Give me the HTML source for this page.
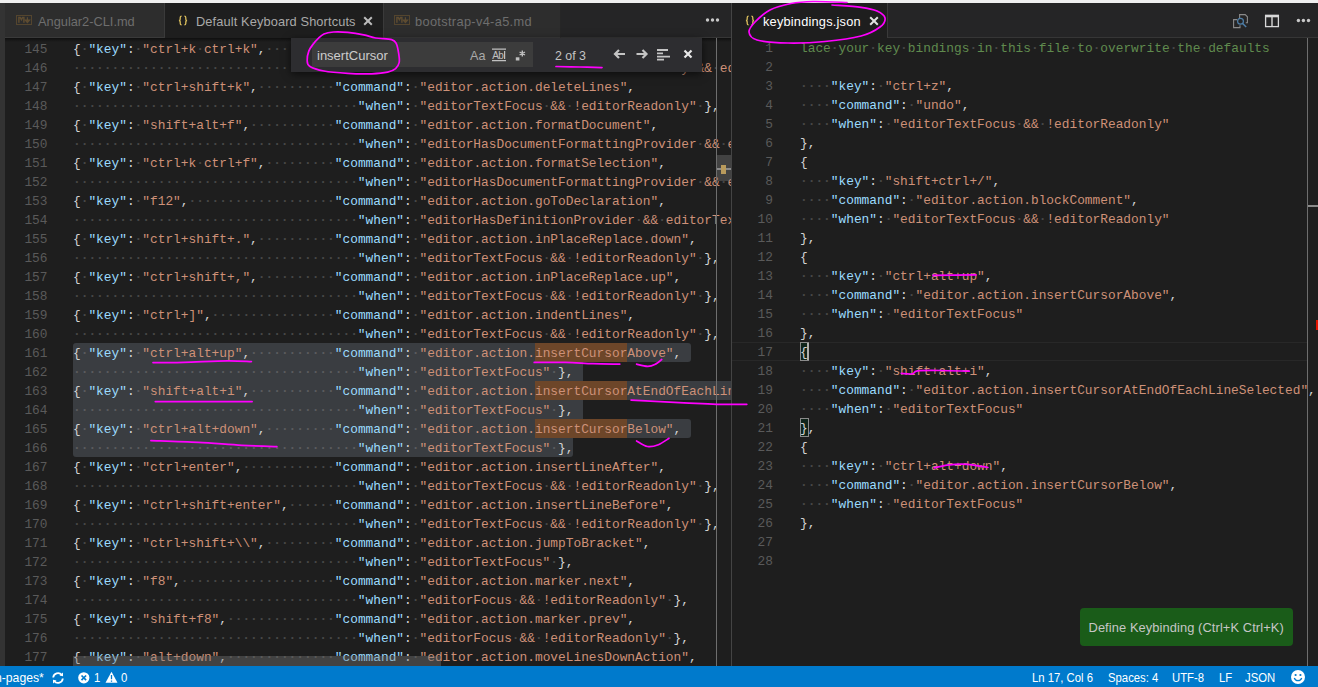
<!DOCTYPE html>
<html><head><meta charset="utf-8">
<style>
*{box-sizing:border-box}
html,body{margin:0;padding:0}
body{width:1318px;height:687px;overflow:hidden;background:#1e1e1e;position:relative;font-family:"Liberation Sans",sans-serif}
.a{position:absolute}
.ln{position:absolute;height:19px;line-height:19px;text-align:right;font-family:"Liberation Mono",monospace;font-size:12.83px;color:#5a5a5a;white-space:pre}
.cl{position:absolute;height:19px;line-height:19px;font-family:"Liberation Mono",monospace;font-size:12.83px;white-space:pre}
i{font-style:normal}
.p{color:#d4d4d4}.k{color:#9cdcfe}.s{color:#ce9178}.w{color:#474747;font-weight:bold}.c{color:#608b4e}
.sl .w{color:#5a5b5e}
.tt{position:absolute;font-size:12.8px;white-space:pre;line-height:16px;height:16px}
.sb{position:absolute;top:668px;font-size:12.3px;transform:scaleX(0.92);transform-origin:0 0;color:#fff;white-space:pre;line-height:21px;height:21px}
.selr{position:absolute;background:#3a3d41;height:19px}
.fm{position:absolute;background:#6d4629;height:19px}
</style></head><body>
<!-- top strip -->
<div class=a style="left:0;top:0;width:1318px;height:3px;background:#efefef"></div>
<!-- left dark strip -->
<div class=a style="left:0;top:3px;width:5px;height:663px;background:#333333"></div>

<!-- ===== LEFT GROUP TAB BAR ===== -->
<div class=a style="left:5px;top:3px;width:726px;height:35px;background:#252526;border-bottom:1px solid #363636"></div>
<div class=a style="left:5px;top:3px;width:160px;height:35px;background:#2d2d2d;border-right:1px solid #3a3a3a;border-bottom:1px solid #3a3a3a"></div>
<div class=a style="left:165px;top:3px;width:219px;height:35px;background:#1e1e1e;border-right:1px solid #3a3a3a"></div>
<div class=a style="left:384px;top:3px;width:177px;height:35px;background:#2d2d2d;border-right:1px solid #262626;border-bottom:1px solid #3d3d3d"></div>

<!-- tab icons/text -->
<svg class=a style="left:16px;top:15px" width="17" height="11" viewBox="0 0 17 11"><rect x="0.5" y="0.5" width="15" height="9" fill="none" stroke="#54452e" stroke-width="1"/><path d="M2.9 7.8V2.4H4.2L5.4 4.6L6.6 2.4H7.9V7.8" fill="none" stroke="#5e4c31" stroke-width="1.5"/><path d="M11.4 2.3V6M9.2 5L11.4 7.6L13.6 5Z" fill="#5e4c31" stroke="#5e4c31" stroke-width="1.2"/></svg>
<div class=tt style="left:38px;top:14px;color:#6e6e6e">Angular2-CLI.md</div>

<svg class=a style="left:178px;top:15px" width="10" height="11" viewBox="0 0 10 11"><path d="M3.6 1.2C2.4 1.2 2.2 1.8 2.2 2.8V4.3C2.2 5 1.8 5.4 1 5.5C1.8 5.6 2.2 6 2.2 6.7V8.2C2.2 9.2 2.4 9.8 3.6 9.8M6.4 1.2C7.6 1.2 7.8 1.8 7.8 2.8V4.3C7.8 5 8.2 5.4 9 5.5C8.2 5.6 7.8 6 7.8 6.7V8.2C7.8 9.2 7.6 9.8 6.4 9.8" fill="none" stroke="#d9bd5c" stroke-width="1.3"/></svg>
<div class=tt style="left:196px;top:14px;color:#a9a9a9;letter-spacing:0.12px">Default Keyboard Shortcuts</div>
<svg class=a style="left:363px;top:16px" width="10" height="10" viewBox="0 0 10 10"><path d="M1.2 1.2L8.8 8.8M8.8 1.2L1.2 8.8" stroke="#bcbcbc" stroke-width="2"/></svg>

<svg class=a style="left:394px;top:15px" width="17" height="11" viewBox="0 0 17 11"><rect x="0.5" y="0.5" width="15" height="9" fill="none" stroke="#54452e" stroke-width="1"/><path d="M2.9 7.8V2.4H4.2L5.4 4.6L6.6 2.4H7.9V7.8" fill="none" stroke="#5e4c31" stroke-width="1.5"/><path d="M11.4 2.3V6M9.2 5L11.4 7.6L13.6 5Z" fill="#5e4c31" stroke="#5e4c31" stroke-width="1.2"/></svg>
<div class=tt style="left:415px;top:14px;color:#6e6e6e;letter-spacing:0.33px">bootstrap-v4-a5.md</div>

<svg class=a style="left:704px;top:17px" width="18" height="6" viewBox="0 0 18 6"><circle cx="3.5" cy="3" r="1.7" fill="#c8c8c8"/><circle cx="8.5" cy="3" r="1.7" fill="#c8c8c8"/><circle cx="13.5" cy="3" r="1.7" fill="#c8c8c8"/></svg>

<!-- ===== LEFT EDITOR ===== -->
<div class=a style="left:5px;top:38px;width:726px;height:628px;overflow:hidden">
  <div class=a style="left:-5px;top:-38px;width:1318px;height:687px">
<div class=ln style="top:40px;left:0;width:47.5px">145</div>
<div class=ln style="top:59px;left:0;width:47.5px">146</div>
<div class=ln style="top:78px;left:0;width:47.5px">147</div>
<div class=ln style="top:97px;left:0;width:47.5px">148</div>
<div class=ln style="top:116px;left:0;width:47.5px">149</div>
<div class=ln style="top:135px;left:0;width:47.5px">150</div>
<div class=ln style="top:154px;left:0;width:47.5px">151</div>
<div class=ln style="top:173px;left:0;width:47.5px">152</div>
<div class=ln style="top:192px;left:0;width:47.5px">153</div>
<div class=ln style="top:211px;left:0;width:47.5px">154</div>
<div class=ln style="top:230px;left:0;width:47.5px">155</div>
<div class=ln style="top:249px;left:0;width:47.5px">156</div>
<div class=ln style="top:268px;left:0;width:47.5px">157</div>
<div class=ln style="top:287px;left:0;width:47.5px">158</div>
<div class=ln style="top:306px;left:0;width:47.5px">159</div>
<div class=ln style="top:325px;left:0;width:47.5px">160</div>
<div class=ln style="top:344px;left:0;width:47.5px">161</div>
<div class=ln style="top:363px;left:0;width:47.5px">162</div>
<div class=ln style="top:382px;left:0;width:47.5px">163</div>
<div class=ln style="top:401px;left:0;width:47.5px">164</div>
<div class=ln style="top:420px;left:0;width:47.5px">165</div>
<div class=ln style="top:439px;left:0;width:47.5px">166</div>
<div class=ln style="top:458px;left:0;width:47.5px">167</div>
<div class=ln style="top:477px;left:0;width:47.5px">168</div>
<div class=ln style="top:496px;left:0;width:47.5px">169</div>
<div class=ln style="top:515px;left:0;width:47.5px">170</div>
<div class=ln style="top:534px;left:0;width:47.5px">171</div>
<div class=ln style="top:553px;left:0;width:47.5px">172</div>
<div class=ln style="top:572px;left:0;width:47.5px">173</div>
<div class=ln style="top:591px;left:0;width:47.5px">174</div>
<div class=ln style="top:610px;left:0;width:47.5px">175</div>
<div class=ln style="top:629px;left:0;width:47.5px">176</div>
<div class=ln style="top:648px;left:0;width:47.5px">177</div>
<div class=selr style="left:73px;top:343px;width:618px;border-radius:3px 3px 3px 0"></div>
<div class=selr style="left:73px;top:362px;width:510px;border-radius:0"></div>
<div class=selr style="left:73px;top:381px;width:667px;border-radius:0"></div>
<div class=selr style="left:73px;top:400px;width:510px;border-radius:0"></div>
<div class=selr style="left:73px;top:419px;width:618px;border-radius:0 3px 3px 0"></div>
<div class=selr style="left:73px;top:438px;width:500px;border-radius:0 0 3px 3px"></div>
<div class=fm style="left:534.8px;top:343px;width:92.4px"></div>
<div class=fm style="left:534.8px;top:381px;width:92.4px"></div>
<div class=fm style="left:534.8px;top:419px;width:92.4px"></div>
<div class="cl" style="top:40px;left:73px"><i class=p>{</i><i class=w>·</i><i class=k>&quot;key&quot;</i><i class=p>:</i><i class=w>·</i><i class=s>&quot;ctrl+k</i><i class=w>·</i><i class=s>ctrl+k&quot;</i><i class=p>,</i><i class=w>·········</i><i class=k>&quot;command&quot;</i><i class=p>:</i><i class=w>·</i><i class=s>&quot;editor.action.defineKeybinding&quot;</i><i class=p>,</i></div>
<div class="cl" style="top:59px;left:73px"><i class=w>·····································</i><i class=k>&quot;when&quot;</i><i class=p>:</i><i class=w>·</i><i class=s>&quot;editorTextFocus</i><i class=w>·</i><i class=s>&amp;&amp;</i><i class=w>·</i><i class=s>!editorReadonly</i><i class=w>·</i><i class=s>&amp;&amp;</i><i class=w>·</i><i class=s>editorLangId</i><i class=w>·</i><i class=s>==</i><i class=w>·</i><i class=s>&#x27;json&#x27;&quot;</i><i class=w>·</i><i class=p>},</i></div>
<div class="cl" style="top:78px;left:73px"><i class=p>{</i><i class=w>·</i><i class=k>&quot;key&quot;</i><i class=p>:</i><i class=w>·</i><i class=s>&quot;ctrl+shift+k&quot;</i><i class=p>,</i><i class=w>··········</i><i class=k>&quot;command&quot;</i><i class=p>:</i><i class=w>·</i><i class=s>&quot;editor.action.deleteLines&quot;</i><i class=p>,</i></div>
<div class="cl" style="top:97px;left:73px"><i class=w>·····································</i><i class=k>&quot;when&quot;</i><i class=p>:</i><i class=w>·</i><i class=s>&quot;editorTextFocus</i><i class=w>·</i><i class=s>&amp;&amp;</i><i class=w>·</i><i class=s>!editorReadonly&quot;</i><i class=w>·</i><i class=p>},</i></div>
<div class="cl" style="top:116px;left:73px"><i class=p>{</i><i class=w>·</i><i class=k>&quot;key&quot;</i><i class=p>:</i><i class=w>·</i><i class=s>&quot;shift+alt+f&quot;</i><i class=p>,</i><i class=w>···········</i><i class=k>&quot;command&quot;</i><i class=p>:</i><i class=w>·</i><i class=s>&quot;editor.action.formatDocument&quot;</i><i class=p>,</i></div>
<div class="cl" style="top:135px;left:73px"><i class=w>·····································</i><i class=k>&quot;when&quot;</i><i class=p>:</i><i class=w>·</i><i class=s>&quot;editorHasDocumentFormattingProvider</i><i class=w>·</i><i class=s>&amp;&amp;</i><i class=w>·</i><i class=s>editorTextFocus</i><i class=w>·</i><i class=s>&amp;&amp;</i><i class=w>·</i><i class=s>!editorReadonly&quot;</i><i class=w>·</i><i class=p>},</i></div>
<div class="cl" style="top:154px;left:73px"><i class=p>{</i><i class=w>·</i><i class=k>&quot;key&quot;</i><i class=p>:</i><i class=w>·</i><i class=s>&quot;ctrl+k</i><i class=w>·</i><i class=s>ctrl+f&quot;</i><i class=p>,</i><i class=w>·········</i><i class=k>&quot;command&quot;</i><i class=p>:</i><i class=w>·</i><i class=s>&quot;editor.action.formatSelection&quot;</i><i class=p>,</i></div>
<div class="cl" style="top:173px;left:73px"><i class=w>·····································</i><i class=k>&quot;when&quot;</i><i class=p>:</i><i class=w>·</i><i class=s>&quot;editorHasDocumentFormattingProvider</i><i class=w>·</i><i class=s>&amp;&amp;</i><i class=w>·</i><i class=s>editorTextFocus</i><i class=w>·</i><i class=s>&amp;&amp;</i><i class=w>·</i><i class=s>!editorReadonly&quot;</i><i class=w>·</i><i class=p>},</i></div>
<div class="cl" style="top:192px;left:73px"><i class=p>{</i><i class=w>·</i><i class=k>&quot;key&quot;</i><i class=p>:</i><i class=w>·</i><i class=s>&quot;f12&quot;</i><i class=p>,</i><i class=w>···················</i><i class=k>&quot;command&quot;</i><i class=p>:</i><i class=w>·</i><i class=s>&quot;editor.action.goToDeclaration&quot;</i><i class=p>,</i></div>
<div class="cl" style="top:211px;left:73px"><i class=w>·····································</i><i class=k>&quot;when&quot;</i><i class=p>:</i><i class=w>·</i><i class=s>&quot;editorHasDefinitionProvider</i><i class=w>·</i><i class=s>&amp;&amp;</i><i class=w>·</i><i class=s>editorTextFocus&quot;</i><i class=w>·</i><i class=p>},</i></div>
<div class="cl" style="top:230px;left:73px"><i class=p>{</i><i class=w>·</i><i class=k>&quot;key&quot;</i><i class=p>:</i><i class=w>·</i><i class=s>&quot;ctrl+shift+.&quot;</i><i class=p>,</i><i class=w>··········</i><i class=k>&quot;command&quot;</i><i class=p>:</i><i class=w>·</i><i class=s>&quot;editor.action.inPlaceReplace.down&quot;</i><i class=p>,</i></div>
<div class="cl" style="top:249px;left:73px"><i class=w>·····································</i><i class=k>&quot;when&quot;</i><i class=p>:</i><i class=w>·</i><i class=s>&quot;editorTextFocus</i><i class=w>·</i><i class=s>&amp;&amp;</i><i class=w>·</i><i class=s>!editorReadonly&quot;</i><i class=w>·</i><i class=p>},</i></div>
<div class="cl" style="top:268px;left:73px"><i class=p>{</i><i class=w>·</i><i class=k>&quot;key&quot;</i><i class=p>:</i><i class=w>·</i><i class=s>&quot;ctrl+shift+,&quot;</i><i class=p>,</i><i class=w>··········</i><i class=k>&quot;command&quot;</i><i class=p>:</i><i class=w>·</i><i class=s>&quot;editor.action.inPlaceReplace.up&quot;</i><i class=p>,</i></div>
<div class="cl" style="top:287px;left:73px"><i class=w>·····································</i><i class=k>&quot;when&quot;</i><i class=p>:</i><i class=w>·</i><i class=s>&quot;editorTextFocus</i><i class=w>·</i><i class=s>&amp;&amp;</i><i class=w>·</i><i class=s>!editorReadonly&quot;</i><i class=w>·</i><i class=p>},</i></div>
<div class="cl" style="top:306px;left:73px"><i class=p>{</i><i class=w>·</i><i class=k>&quot;key&quot;</i><i class=p>:</i><i class=w>·</i><i class=s>&quot;ctrl+]&quot;</i><i class=p>,</i><i class=w>················</i><i class=k>&quot;command&quot;</i><i class=p>:</i><i class=w>·</i><i class=s>&quot;editor.action.indentLines&quot;</i><i class=p>,</i></div>
<div class="cl" style="top:325px;left:73px"><i class=w>·····································</i><i class=k>&quot;when&quot;</i><i class=p>:</i><i class=w>·</i><i class=s>&quot;editorTextFocus</i><i class=w>·</i><i class=s>&amp;&amp;</i><i class=w>·</i><i class=s>!editorReadonly&quot;</i><i class=w>·</i><i class=p>},</i></div>
<div class="cl sl" style="top:344px;left:73px"><i class=p>{</i><i class=w>·</i><i class=k>&quot;key&quot;</i><i class=p>:</i><i class=w>·</i><i class=s>&quot;ctrl+alt+up&quot;</i><i class=p>,</i><i class=w>···········</i><i class=k>&quot;command&quot;</i><i class=p>:</i><i class=w>·</i><i class=s>&quot;editor.action.insertCursorAbove&quot;</i><i class=p>,</i></div>
<div class="cl sl" style="top:363px;left:73px"><i class=w>·····································</i><i class=k>&quot;when&quot;</i><i class=p>:</i><i class=w>·</i><i class=s>&quot;editorTextFocus&quot;</i><i class=w>·</i><i class=p>},</i></div>
<div class="cl sl" style="top:382px;left:73px"><i class=p>{</i><i class=w>·</i><i class=k>&quot;key&quot;</i><i class=p>:</i><i class=w>·</i><i class=s>&quot;shift+alt+i&quot;</i><i class=p>,</i><i class=w>···········</i><i class=k>&quot;command&quot;</i><i class=p>:</i><i class=w>·</i><i class=s>&quot;editor.action.insertCursorAtEndOfEachLineSelected&quot;</i><i class=p>,</i></div>
<div class="cl sl" style="top:401px;left:73px"><i class=w>·····································</i><i class=k>&quot;when&quot;</i><i class=p>:</i><i class=w>·</i><i class=s>&quot;editorTextFocus&quot;</i><i class=w>·</i><i class=p>},</i></div>
<div class="cl sl" style="top:420px;left:73px"><i class=p>{</i><i class=w>·</i><i class=k>&quot;key&quot;</i><i class=p>:</i><i class=w>·</i><i class=s>&quot;ctrl+alt+down&quot;</i><i class=p>,</i><i class=w>·········</i><i class=k>&quot;command&quot;</i><i class=p>:</i><i class=w>·</i><i class=s>&quot;editor.action.insertCursorBelow&quot;</i><i class=p>,</i></div>
<div class="cl sl" style="top:439px;left:73px"><i class=w>·····································</i><i class=k>&quot;when&quot;</i><i class=p>:</i><i class=w>·</i><i class=s>&quot;editorTextFocus&quot;</i><i class=w>·</i><i class=p>},</i></div>
<div class="cl" style="top:458px;left:73px"><i class=p>{</i><i class=w>·</i><i class=k>&quot;key&quot;</i><i class=p>:</i><i class=w>·</i><i class=s>&quot;ctrl+enter&quot;</i><i class=p>,</i><i class=w>············</i><i class=k>&quot;command&quot;</i><i class=p>:</i><i class=w>·</i><i class=s>&quot;editor.action.insertLineAfter&quot;</i><i class=p>,</i></div>
<div class="cl" style="top:477px;left:73px"><i class=w>·····································</i><i class=k>&quot;when&quot;</i><i class=p>:</i><i class=w>·</i><i class=s>&quot;editorTextFocus</i><i class=w>·</i><i class=s>&amp;&amp;</i><i class=w>·</i><i class=s>!editorReadonly&quot;</i><i class=w>·</i><i class=p>},</i></div>
<div class="cl" style="top:496px;left:73px"><i class=p>{</i><i class=w>·</i><i class=k>&quot;key&quot;</i><i class=p>:</i><i class=w>·</i><i class=s>&quot;ctrl+shift+enter&quot;</i><i class=p>,</i><i class=w>······</i><i class=k>&quot;command&quot;</i><i class=p>:</i><i class=w>·</i><i class=s>&quot;editor.action.insertLineBefore&quot;</i><i class=p>,</i></div>
<div class="cl" style="top:515px;left:73px"><i class=w>·····································</i><i class=k>&quot;when&quot;</i><i class=p>:</i><i class=w>·</i><i class=s>&quot;editorTextFocus</i><i class=w>·</i><i class=s>&amp;&amp;</i><i class=w>·</i><i class=s>!editorReadonly&quot;</i><i class=w>·</i><i class=p>},</i></div>
<div class="cl" style="top:534px;left:73px"><i class=p>{</i><i class=w>·</i><i class=k>&quot;key&quot;</i><i class=p>:</i><i class=w>·</i><i class=s>&quot;ctrl+shift+\\&quot;</i><i class=p>,</i><i class=w>·········</i><i class=k>&quot;command&quot;</i><i class=p>:</i><i class=w>·</i><i class=s>&quot;editor.action.jumpToBracket&quot;</i><i class=p>,</i></div>
<div class="cl" style="top:553px;left:73px"><i class=w>·····································</i><i class=k>&quot;when&quot;</i><i class=p>:</i><i class=w>·</i><i class=s>&quot;editorTextFocus&quot;</i><i class=w>·</i><i class=p>},</i></div>
<div class="cl" style="top:572px;left:73px"><i class=p>{</i><i class=w>·</i><i class=k>&quot;key&quot;</i><i class=p>:</i><i class=w>·</i><i class=s>&quot;f8&quot;</i><i class=p>,</i><i class=w>····················</i><i class=k>&quot;command&quot;</i><i class=p>:</i><i class=w>·</i><i class=s>&quot;editor.action.marker.next&quot;</i><i class=p>,</i></div>
<div class="cl" style="top:591px;left:73px"><i class=w>·····································</i><i class=k>&quot;when&quot;</i><i class=p>:</i><i class=w>·</i><i class=s>&quot;editorFocus</i><i class=w>·</i><i class=s>&amp;&amp;</i><i class=w>·</i><i class=s>!editorReadonly&quot;</i><i class=w>·</i><i class=p>},</i></div>
<div class="cl" style="top:610px;left:73px"><i class=p>{</i><i class=w>·</i><i class=k>&quot;key&quot;</i><i class=p>:</i><i class=w>·</i><i class=s>&quot;shift+f8&quot;</i><i class=p>,</i><i class=w>··············</i><i class=k>&quot;command&quot;</i><i class=p>:</i><i class=w>·</i><i class=s>&quot;editor.action.marker.prev&quot;</i><i class=p>,</i></div>
<div class="cl" style="top:629px;left:73px"><i class=w>·····································</i><i class=k>&quot;when&quot;</i><i class=p>:</i><i class=w>·</i><i class=s>&quot;editorFocus</i><i class=w>·</i><i class=s>&amp;&amp;</i><i class=w>·</i><i class=s>!editorReadonly&quot;</i><i class=w>·</i><i class=p>},</i></div>
<div class="cl" style="top:648px;left:73px"><i class=p>{</i><i class=w>·</i><i class=k>&quot;key&quot;</i><i class=p>:</i><i class=w>·</i><i class=s>&quot;alt+down&quot;</i><i class=p>,</i><i class=w>··············</i><i class=k>&quot;command&quot;</i><i class=p>:</i><i class=w>·</i><i class=s>&quot;editor.action.moveLinesDownAction&quot;</i><i class=p>,</i></div>
  </div>
  <!-- top scroll shadow -->
  <div class=a style="left:0;top:0;width:726px;height:6px;background:linear-gradient(#00000080,#00000000 4px)"></div>
  <!-- overview ruler border -->
  <div class=a style="left:711px;top:0;width:1px;height:628px;background:#6e6e6e"></div>
  <!-- slider -->
  <div class=a style="left:712px;top:117px;width:14px;height:26px;background:rgba(121,121,121,0.4)"></div>
  <div class=a style="left:712px;top:130px;width:14px;height:2px;background:#8a8a8a"></div>
  <div class=a style="left:716px;top:127px;width:5px;height:9px;background:#b89a5c"></div>
  <!-- horizontal slider -->
  <div class=a style="left:68px;top:618px;width:368px;height:10px;background:rgba(121,121,121,0.4)"></div>
</div>

<!-- find widget -->
<div class=a style="left:291px;top:38px;width:411px;height:34px;background:#2d2d30;box-shadow:0 2px 8px rgba(0,0,0,0.6)"></div>
<div class=a style="left:312px;top:42px;width:221px;height:25px;background:#3c3c3c"></div>
<div class=tt style="left:317px;top:48px;color:#cccccc;font-size:13px">insertCursor</div>
<div class=tt style="left:470px;top:48px;color:#aaaaaa;font-size:12.6px">Aa</div>
<svg class=a style="left:490px;top:48px" width="18" height="14" viewBox="0 0 18 14"><path d="M2 1.2H16M2 12.6H16" stroke="#c0c0c0" stroke-width="1.3"/><path d="M14.6 3V11" stroke="#c0c0c0" stroke-width="1.2"/><text x="2.2" y="10.8" font-family="Liberation Sans" font-size="10" fill="#c0c0c0" letter-spacing="-0.5">Ab</text></svg>
<svg class=a style="left:514px;top:49px" width="14" height="13" viewBox="0 0 14 13"><rect x="1.8" y="8.3" width="3.6" height="3.2" fill="#c0c0c0"/><path d="M8.3 1.5V7.5M5.6 3L11 6M11 3L5.6 6" stroke="#c0c0c0" stroke-width="1.4"/></svg>
<div class=tt style="left:555px;top:48px;color:#c4c4c4;font-size:12.4px">2 of 3</div>
<svg class=a style="left:612px;top:47px" width="84" height="16" viewBox="0 0 84 16">
 <path d="M3 7H13M7 3L3 7L7 11" fill="none" stroke="#c4c4c4" stroke-width="2.2"/>
 <path d="M24.5 7H34.5M30.5 3L34.5 7L30.5 11" fill="none" stroke="#c4c4c4" stroke-width="2.2"/>
 <path d="M45 3H56M45 6.3H51M45 9.6H58M45 12.7H52" fill="none" stroke="#c4c4c4" stroke-width="1.8"/>
 <path d="M72.5 3.5L79.5 10.5M79.5 3.5L72.5 10.5" fill="none" stroke="#e8e8e8" stroke-width="2.2"/>
</svg>

<!-- group separator -->
<div class=a style="left:731px;top:3px;width:1px;height:663px;background:#444444"></div>

<!-- ===== RIGHT GROUP ===== -->
<div class=a style="left:732px;top:3px;width:586px;height:35px;background:#252526;border-bottom:1px solid #363636"></div>
<div class=a style="left:732px;top:3px;width:156px;height:35px;background:#1e1e1e;border-right:1px solid #3a3a3a"></div>
<svg class=a style="left:745px;top:15px" width="10" height="11" viewBox="0 0 10 11"><path d="M3.6 1.2C2.4 1.2 2.2 1.8 2.2 2.8V4.3C2.2 5 1.8 5.4 1 5.5C1.8 5.6 2.2 6 2.2 6.7V8.2C2.2 9.2 2.4 9.8 3.6 9.8M6.4 1.2C7.6 1.2 7.8 1.8 7.8 2.8V4.3C7.8 5 8.2 5.4 9 5.5C8.2 5.6 7.8 6 7.8 6.7V8.2C7.8 9.2 7.6 9.8 6.4 9.8" fill="none" stroke="#d9bd5c" stroke-width="1.3"/></svg>
<div class=tt style="left:763px;top:14px;color:#ffffff;font-size:12.8px;letter-spacing:0.2px">keybindings.json</div>
<svg class=a style="left:869px;top:16px" width="10" height="10" viewBox="0 0 10 10"><path d="M1.2 1.2L8.8 8.8M8.8 1.2L1.2 8.8" stroke="#e0e0e0" stroke-width="2"/></svg>

<svg class=a style="left:1230px;top:12px" width="20" height="18" viewBox="0 0 20 18">
 <path d="M9.6 6V2.6H15.2L17.4 4.8V10.8H15.8" fill="none" stroke="#8a8a8a" stroke-width="1.1"/>
 <path d="M7.2 7.6H3.6V15.6H10V13.2" fill="none" stroke="#8a8a8a" stroke-width="1.1"/>
 <circle cx="10.5" cy="9.3" r="2.9" fill="none" stroke="#4f80aa" stroke-width="1.2"/>
 <path d="M12.6 11.5L16.2 15.1" stroke="#4f80aa" stroke-width="1.4"/>
</svg>
<svg class=a style="left:1264px;top:14px" width="16" height="14" viewBox="0 0 16 14">
 <rect x="1.6" y="1.6" width="12.8" height="11" fill="none" stroke="#d8d8d8" stroke-width="1.3"/>
 <path d="M1 2H15" stroke="#d8d8d8" stroke-width="2.6"/>
 <path d="M8 2V12.5" stroke="#d8d8d8" stroke-width="1.4"/>
</svg>
<svg class=a style="left:1295px;top:17px" width="18" height="6" viewBox="0 0 18 6"><circle cx="3.4" cy="3.5" r="1.7" fill="#c8c8c8"/><circle cx="8.4" cy="3.5" r="1.7" fill="#c8c8c8"/><circle cx="13.5" cy="3.5" r="1.7" fill="#c8c8c8"/></svg>

<div class=a style="left:732px;top:38px;width:586px;height:628px;overflow:hidden">
  <div class=a style="left:-732px;top:-38px;width:1318px;height:687px">
  <!-- current line -->
  <div class=a style="left:732px;top:342px;width:575px;height:19px;border-top:1px solid #282828;border-bottom:1px solid #282828"></div>
  <div class=a style="left:800px;top:342px;width:9px;height:19px;background:#10241a;border:1px solid #8a8a8a"></div>
  <div class=a style="left:800px;top:418px;width:9px;height:19px;background:#10241a;border:1px solid #8a8a8a"></div>
  <div class=a style="left:807px;top:343px;width:2px;height:17px;background:#aeafad"></div>
<div class=ln style="top:39px;left:0;width:773px">1</div>
<div class=ln style="top:58px;left:0;width:773px">2</div>
<div class=ln style="top:77px;left:0;width:773px">3</div>
<div class=ln style="top:96px;left:0;width:773px">4</div>
<div class=ln style="top:115px;left:0;width:773px">5</div>
<div class=ln style="top:134px;left:0;width:773px">6</div>
<div class=ln style="top:153px;left:0;width:773px">7</div>
<div class=ln style="top:172px;left:0;width:773px">8</div>
<div class=ln style="top:191px;left:0;width:773px">9</div>
<div class=ln style="top:210px;left:0;width:773px">10</div>
<div class=ln style="top:229px;left:0;width:773px">11</div>
<div class=ln style="top:248px;left:0;width:773px">12</div>
<div class=ln style="top:267px;left:0;width:773px">13</div>
<div class=ln style="top:286px;left:0;width:773px">14</div>
<div class=ln style="top:305px;left:0;width:773px">15</div>
<div class=ln style="top:324px;left:0;width:773px">16</div>
<div class=ln style="top:343px;left:0;width:773px">17</div>
<div class=ln style="top:362px;left:0;width:773px">18</div>
<div class=ln style="top:381px;left:0;width:773px">19</div>
<div class=ln style="top:400px;left:0;width:773px">20</div>
<div class=ln style="top:419px;left:0;width:773px">21</div>
<div class=ln style="top:438px;left:0;width:773px">22</div>
<div class=ln style="top:457px;left:0;width:773px">23</div>
<div class=ln style="top:476px;left:0;width:773px">24</div>
<div class=ln style="top:495px;left:0;width:773px">25</div>
<div class=ln style="top:514px;left:0;width:773px">26</div>
<div class=ln style="top:533px;left:0;width:773px">27</div>
<div class=ln style="top:552px;left:0;width:773px">28</div>
<div class=cl style="top:39px;left:800px"><i class=c>lace</i><i class=w>·</i><i class=c>your</i><i class=w>·</i><i class=c>key</i><i class=w>·</i><i class=c>bindings</i><i class=w>·</i><i class=c>in</i><i class=w>·</i><i class=c>this</i><i class=w>·</i><i class=c>file</i><i class=w>·</i><i class=c>to</i><i class=w>·</i><i class=c>overwrite</i><i class=w>·</i><i class=c>the</i><i class=w>·</i><i class=c>defaults</i></div>
<div class=cl style="top:58px;left:800px"></div>
<div class=cl style="top:77px;left:800px"><i class=w>····</i><i class=k>&quot;key&quot;</i><i class=p>:</i><i class=w>·</i><i class=s>&quot;ctrl+z&quot;</i><i class=p>,</i></div>
<div class=cl style="top:96px;left:800px"><i class=w>····</i><i class=k>&quot;command&quot;</i><i class=p>:</i><i class=w>·</i><i class=s>&quot;undo&quot;</i><i class=p>,</i></div>
<div class=cl style="top:115px;left:800px"><i class=w>····</i><i class=k>&quot;when&quot;</i><i class=p>:</i><i class=w>·</i><i class=s>&quot;editorTextFocus</i><i class=w>·</i><i class=s>&amp;&amp;</i><i class=w>·</i><i class=s>!editorReadonly&quot;</i></div>
<div class=cl style="top:134px;left:800px"><i class=p>},</i></div>
<div class=cl style="top:153px;left:800px"><i class=p>{</i></div>
<div class=cl style="top:172px;left:800px"><i class=w>····</i><i class=k>&quot;key&quot;</i><i class=p>:</i><i class=w>·</i><i class=s>&quot;shift+ctrl+/&quot;</i><i class=p>,</i></div>
<div class=cl style="top:191px;left:800px"><i class=w>····</i><i class=k>&quot;command&quot;</i><i class=p>:</i><i class=w>·</i><i class=s>&quot;editor.action.blockComment&quot;</i><i class=p>,</i></div>
<div class=cl style="top:210px;left:800px"><i class=w>····</i><i class=k>&quot;when&quot;</i><i class=p>:</i><i class=w>·</i><i class=s>&quot;editorTextFocus</i><i class=w>·</i><i class=s>&amp;&amp;</i><i class=w>·</i><i class=s>!editorReadonly&quot;</i></div>
<div class=cl style="top:229px;left:800px"><i class=p>},</i></div>
<div class=cl style="top:248px;left:800px"><i class=p>{</i></div>
<div class=cl style="top:267px;left:800px"><i class=w>····</i><i class=k>&quot;key&quot;</i><i class=p>:</i><i class=w>·</i><i class=s>&quot;ctrl+alt+up&quot;</i><i class=p>,</i></div>
<div class=cl style="top:286px;left:800px"><i class=w>····</i><i class=k>&quot;command&quot;</i><i class=p>:</i><i class=w>·</i><i class=s>&quot;editor.action.insertCursorAbove&quot;</i><i class=p>,</i></div>
<div class=cl style="top:305px;left:800px"><i class=w>····</i><i class=k>&quot;when&quot;</i><i class=p>:</i><i class=w>·</i><i class=s>&quot;editorTextFocus&quot;</i></div>
<div class=cl style="top:324px;left:800px"><i class=p>},</i></div>
<div class=cl style="top:343px;left:800px"><i class=p>{</i></div>
<div class=cl style="top:362px;left:800px"><i class=w>····</i><i class=k>&quot;key&quot;</i><i class=p>:</i><i class=w>·</i><i class=s>&quot;shift+alt+i&quot;</i><i class=p>,</i></div>
<div class=cl style="top:381px;left:800px"><i class=w>····</i><i class=k>&quot;command&quot;</i><i class=p>:</i><i class=w>·</i><i class=s>&quot;editor.action.insertCursorAtEndOfEachLineSelected&quot;</i><i class=p>,</i></div>
<div class=cl style="top:400px;left:800px"><i class=w>····</i><i class=k>&quot;when&quot;</i><i class=p>:</i><i class=w>·</i><i class=s>&quot;editorTextFocus&quot;</i></div>
<div class=cl style="top:419px;left:800px"><i class=p>},</i></div>
<div class=cl style="top:438px;left:800px"><i class=p>{</i></div>
<div class=cl style="top:457px;left:800px"><i class=w>····</i><i class=k>&quot;key&quot;</i><i class=p>:</i><i class=w>·</i><i class=s>&quot;ctrl+alt+down&quot;</i><i class=p>,</i></div>
<div class=cl style="top:476px;left:800px"><i class=w>····</i><i class=k>&quot;command&quot;</i><i class=p>:</i><i class=w>·</i><i class=s>&quot;editor.action.insertCursorBelow&quot;</i><i class=p>,</i></div>
<div class=cl style="top:495px;left:800px"><i class=w>····</i><i class=k>&quot;when&quot;</i><i class=p>:</i><i class=w>·</i><i class=s>&quot;editorTextFocus&quot;</i></div>
<div class=cl style="top:514px;left:800px"><i class=p>},</i></div>
<div class=cl style="top:533px;left:800px"></div>
<div class=cl style="top:552px;left:800px"></div>
  </div>
  <div class=a style="left:575px;top:0;width:1px;height:628px;background:#6e6e6e"></div>
  <div class=a style="left:576px;top:167px;width:10px;height:2px;background:#8a8a8a"></div>
  <div class=a style="left:584px;top:282px;width:2px;height:10px;background:#e51400"></div>
</div>

<!-- define keybinding button -->
<div class=a style="left:1080px;top:608px;width:213px;height:38px;background:#1a5c19;border-radius:4px"></div>
<div class=tt style="left:1088.5px;top:620px;color:#c6c6c6;font-size:12.85px;letter-spacing:0.1px">Define Keybinding (Ctrl+K Ctrl+K)</div>

<!-- status bar -->
<div class=a style="left:0;top:666px;width:1318px;height:21px;background:#007acc"></div>
<div class=sb style="left:-5px;font-size:12.2px;transform:none">h-pages*</div>
<svg class=a style="left:50px;top:671px" width="16" height="14" viewBox="0 0 16 14">
 <path d="M3.2 6.5A4.8 4.8 0 0 1 11.8 4" fill="none" stroke="#fff" stroke-width="1.8"/>
 <path d="M12.8 7.5A4.8 4.8 0 0 1 4.2 10" fill="none" stroke="#fff" stroke-width="1.8"/>
 <path d="M9.5 4.6L13 5.2L13 1.5Z" fill="#fff"/><path d="M6.5 9.4L3 8.8L3 12.5Z" fill="#fff"/>
</svg>
<svg class=a style="left:77px;top:671px" width="14" height="14" viewBox="0 0 14 14"><circle cx="6.8" cy="6.8" r="5.6" fill="#fff"/><path d="M4.5 4.5L9.1 9.1M9.1 4.5L4.5 9.1" stroke="#007acc" stroke-width="1.7"/></svg>
<div class=sb style="left:94px">1</div>
<svg class=a style="left:105px;top:671px" width="14" height="13" viewBox="0 0 14 13"><path d="M6.5 0.8L12.5 11.8H0.5Z" fill="#fff"/><path d="M6.5 4V8.3M6.5 9.4V10.8" stroke="#007acc" stroke-width="1.3"/></svg>
<div class=sb style="left:121px">0</div>

<div class=sb style="left:1032px">Ln 17, Col 6</div>
<div class=sb style="left:1108px">Spaces: 4</div>
<div class=sb style="left:1172px">UTF-8</div>
<div class=sb style="left:1219px">LF</div>
<div class=sb style="left:1245px">JSON</div>
<svg class=a style="left:1290px;top:669px" width="16" height="16" viewBox="0 0 16 16"><circle cx="8" cy="8" r="7" fill="#fff"/><circle cx="5.6" cy="6" r="1.1" fill="#007acc"/><circle cx="10.4" cy="6" r="1.1" fill="#007acc"/><path d="M4.3 9A3.9 3.9 0 0 0 11.7 9" fill="none" stroke="#007acc" stroke-width="1.3"/></svg>

<!-- annotations -->
<svg class=a style="left:0;top:0" width="1318" height="687" viewBox="0 0 1318 687">
<g fill="none" stroke="#ff00ff" stroke-width="1.7" stroke-linecap="round" stroke-linejoin="round">
 <path d="M318.3 38.4C320.2 36.6 321.4 35.1 323.9 34.0C326.4 32.9 329.5 32.3 333.5 32.0C337.5 31.7 342.8 31.9 347.8 32.4C352.8 32.9 359.1 33.9 363.7 34.8C368.3 35.7 371.0 37.2 375.7 38.0C380.4 38.8 388.2 38.6 391.6 39.6C395.1 40.6 395.2 41.5 396.4 43.9C397.6 46.3 398.3 51.2 398.8 54.3C399.3 57.4 399.7 59.9 399.2 62.3C398.7 64.7 397.5 66.9 395.6 68.6C393.7 70.2 391.6 71.3 387.6 72.2C383.6 73.1 378.3 73.6 371.7 73.8C365.1 74.0 355.8 73.9 347.8 73.4C339.8 72.9 330.3 72.2 323.9 71.0C317.5 69.8 312.4 68.0 309.6 66.2C306.8 64.4 307.3 62.4 307.2 59.9C307.1 57.4 307.9 53.6 308.8 51.1C309.7 48.6 311.1 46.8 312.7 44.7C314.3 42.6 316.4 40.2 318.3 38.4Z"/>
 <path d="M556.0 66.5C560.0 66.6 572.3 66.8 580.0 67.0C587.7 67.2 598.3 67.5 602.0 67.6"/>
 <path d="M847.0 2.5C841.3 2.3 822.3 1.3 813.0 1.5C803.7 1.7 798.2 2.1 791.0 3.5C783.8 4.9 776.0 6.9 770.0 10.0C764.0 13.1 758.5 18.3 755.0 22.0C751.5 25.7 748.7 29.0 749.0 32.0C749.3 35.0 750.5 38.2 757.0 40.0C763.5 41.8 776.7 42.8 788.0 43.0C799.3 43.2 812.8 42.7 825.0 41.5C837.2 40.3 851.8 38.4 861.0 36.0C870.2 33.6 876.0 30.0 880.0 27.0C884.0 24.0 885.5 20.7 885.0 18.0C884.5 15.3 881.0 12.8 877.0 11.0C873.0 9.2 868.5 8.3 861.0 7.3C853.5 6.3 836.8 5.4 832.0 5.0"/>
 <path d="M153.0 362.6C158.1 362.6 171.3 362.6 183.7 362.3C196.1 362.0 216.1 360.9 227.4 360.8C238.7 360.7 247.4 361.5 251.4 361.6"/>
 <path d="M155.3 401.6C171.4 401.6 236.0 401.6 252.1 401.6"/>
 <path d="M150.9 440.6C158.8 440.9 183.0 441.6 198.2 442.4C213.4 443.2 228.8 444.6 241.9 445.3C255.0 446.0 271.1 446.5 276.9 446.7"/>
 <path d="M534.2 362.4C539.4 362.4 555.7 362.2 565.5 362.4C575.3 362.6 583.9 363.4 592.9 363.7C601.9 364.0 615.3 364.1 619.8 364.2"/>
 <path d="M636.6 364.2C638.4 364.6 644.5 366.3 647.5 366.4C650.5 366.5 652.4 365.8 654.8 364.6C657.2 363.5 660.6 360.4 661.7 359.5"/>
 <path d="M631.1 400.1C639.9 400.6 669.6 402.1 683.9 402.8C698.2 403.5 706.2 404.1 716.7 404.3C727.2 404.6 741.8 404.3 746.8 404.3"/>
 <path d="M636.6 441.0C638.4 441.9 643.9 445.9 647.5 446.5C651.1 447.1 654.8 446.1 658.4 444.7C662.0 443.3 667.2 439.4 669.0 438.3"/>
 <path d="M933.0 275.4C940.2 275.3 968.8 275.0 976.0 274.9"/>
 <path d="M901.3 373.4C903.2 373.5 909.8 374.3 912.5 373.9C915.2 373.5 912.9 371.5 917.5 370.9C922.1 370.3 931.5 370.4 940.1 370.5C948.7 370.6 964.4 371.1 969.3 371.2"/>
 <path d="M934.2 467.9C936.7 467.4 943.7 465.4 949.2 464.8C954.7 464.2 961.0 463.9 967.4 464.3C973.8 464.8 984.5 467.0 987.9 467.5"/>
</g>
</svg>
</body></html>
